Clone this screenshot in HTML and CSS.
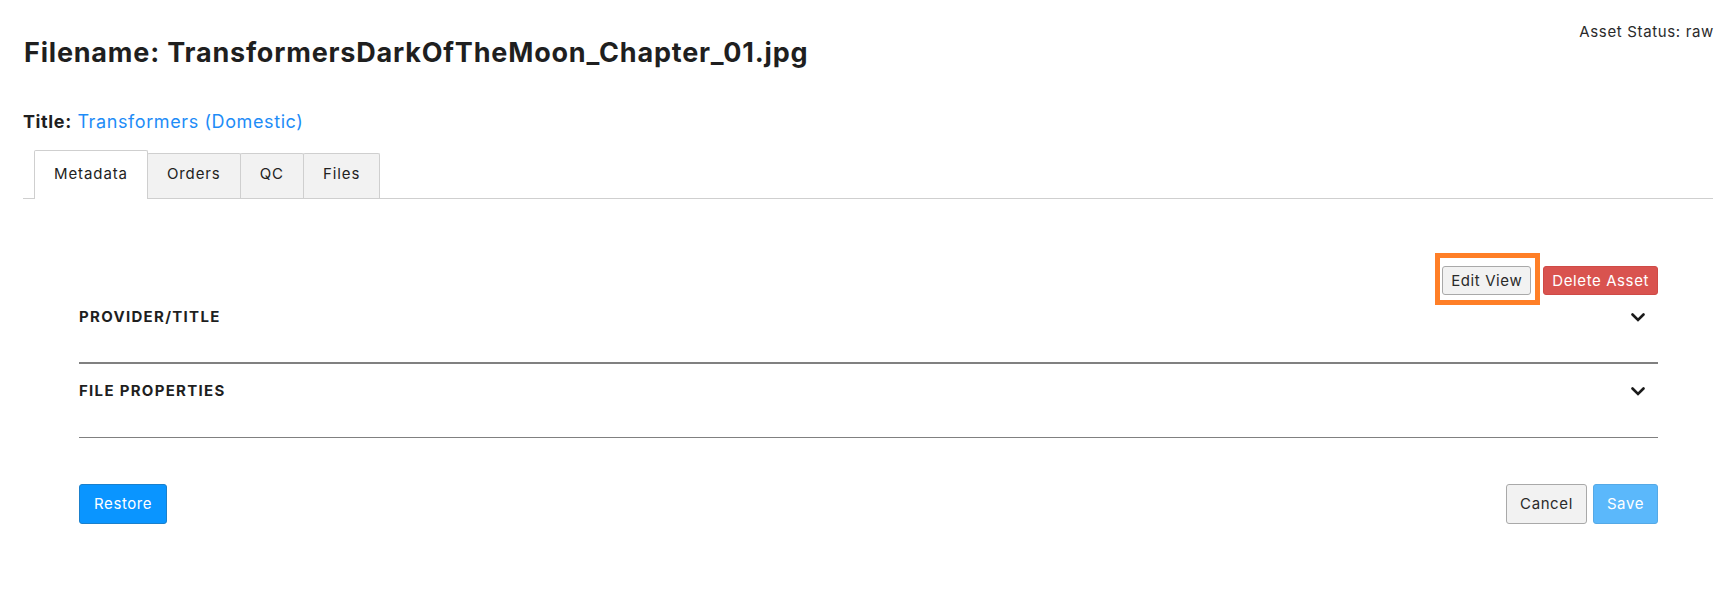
FILE: index.html
```html
<!DOCTYPE html>
<html lang="en">
<head>
<meta charset="utf-8">
<title>Asset</title>
<link rel="stylesheet" href="styles.css">
</head>
<body>
<div class="page">
  <header class="top">
    <h1 class="filename">Filename: TransformersDarkOfTheMoon_Chapter_01.jpg</h1>
    <div class="status">Asset Status: raw</div>
  </header>
  <div class="title-line"><span class="label">Title:</span> <a class="title-link" href="#">Transformers (Domestic)</a></div>

  <nav class="tabs">
    <div class="tab active">Metadata</div>
    <div class="tab">Orders</div>
    <div class="tab">QC</div>
    <div class="tab">Files</div>
  </nav>

  <section class="panel">
    <div class="actions">
      <span class="highlight"><button class="btn btn-small btn-default">Edit View</button></span>
      <button class="btn btn-small btn-danger">Delete Asset</button>
    </div>

    <div class="acc-item first">
      <span class="acc-title">PROVIDER/TITLE</span>
      <svg class="chev" width="14" height="9" viewBox="0 0 14 9"><path d="M1.5 1.5 L7 7 L12.5 1.5" fill="none" stroke="#1a1a1a" stroke-width="2.6" stroke-linecap="round" stroke-linejoin="miter"/></svg>
    </div>
    <div class="acc-item second">
      <span class="acc-title">FILE PROPERTIES</span>
      <svg class="chev" width="14" height="9" viewBox="0 0 14 9"><path d="M1.5 1.5 L7 7 L12.5 1.5" fill="none" stroke="#1a1a1a" stroke-width="2.6" stroke-linecap="round" stroke-linejoin="miter"/></svg>
    </div>

    <div class="footer">
      <button class="btn btn-large btn-primary">Restore</button>
      <div class="footer-right">
        <button class="btn btn-large btn-compact btn-default">Cancel</button>
        <button class="btn btn-large btn-compact btn-save">Save</button>
      </div>
    </div>
  </section>
</div>
</body>
</html>
```

FILE: styles.css
```css
* { box-sizing: border-box; }

html, body {
  margin: 0;
  padding: 0;
  background: #ffffff;
}

body {
  font-family: Inter, "Noto Sans", sans-serif;
  color: #222222;
}

.page {
  padding: 22px 18px 0 23px;
}

.top {
  display: flex;
  justify-content: space-between;
  align-items: flex-start;
}

.filename {
  margin: 15px 0 0 1px;
  font-size: 27px;
  line-height: 32px;
  font-weight: 700;
  color: #1f1f1f;
  letter-spacing: 0.8px;
}

.status {
  font-size: 15px;
  line-height: 20px;
  color: #2a2a2a;
  letter-spacing: 0.65px;
  margin-right: -1px;
}

.title-line {
  margin-top: 41px;
  font-size: 18px;
  line-height: 24px;
  letter-spacing: 0.6px;
}

.label {
  font-weight: 700;
  color: #1f1f1f;
}

.title-link {
  color: #1e8cf7;
  text-decoration: none;
}

.tabs {
  display: flex;
  align-items: flex-end;
  margin-top: 16px;
  padding-left: 11px;
  border-bottom: 1px solid #cfcfcf;
  height: 49px;
}

.tab {
  font-size: 15px;
  line-height: 20px;
  letter-spacing: 0.9px;
  color: #222222;
  padding: 10px 19px 14px;
  background: #f2f2f2;
  border: 1px solid #cfcfcf;
  border-bottom: none;
  border-radius: 2px 2px 0 0;
  margin-right: -1px;
}

.tab.active {
  background: #ffffff;
  padding-top: 13px;
  padding-bottom: 15px;
  margin-bottom: -1px;
  position: relative;
  z-index: 1;
}

.panel {
  margin: 0 55px 0 56px;
}

.actions {
  display: flex;
  justify-content: flex-end;
  gap: 12px;
  margin-top: 67px;
}

.highlight {
  position: relative;
  display: inline-flex;
}

.highlight::after {
  content: "";
  position: absolute;
  top: -13px;
  left: -7px;
  right: -9px;
  bottom: -10px;
  border: 5px solid #ff7f27;
  pointer-events: none;
}

.btn {
  font-family: Inter, "Noto Sans", sans-serif;
  font-size: 15px;
  letter-spacing: 0.6px;
  border-radius: 3px;
  cursor: pointer;
  white-space: nowrap;
}

.btn-small {
  height: 29px;
  padding: 0 8px;
  line-height: 27px;
}

.btn-large {
  height: 40px;
  padding: 0 14px;
  line-height: 38px;
}

.btn-compact {
  padding: 0 13px;
}

.btn-default {
  background: #f2f2f2;
  border: 1px solid #a9a9a9;
  color: #2a2a2a;
}

.btn-danger {
  background: #d9534f;
  border: 1px solid #cf4a46;
  color: #ffffff;
}

.btn-primary {
  background: #0a95ff;
  border: 1px solid #1a80cc;
  color: #ffffff;
}

.btn-save {
  background: #5bb8fb;
  border: 1px solid #55a9e6;
  color: #ffffff;
}

.acc-item {
  display: flex;
  justify-content: space-between;
  align-items: center;
}

.acc-item.first {
  padding: 12px 0 35px;
  border-bottom: 2px solid #808080;
}

.acc-item.second {
  padding: 17px 0 36px;
  border-bottom: 1px solid #808080;
}

.acc-title {
  font-size: 15px;
  line-height: 20px;
  font-weight: 700;
  letter-spacing: 1.3px;
  color: #1f1f1f;
}

.chev {
  margin-right: 13px;
  display: block;
}

.footer {
  display: flex;
  justify-content: space-between;
  margin-top: 46px;
}

.footer-right {
  display: flex;
  gap: 6px;
}
```
